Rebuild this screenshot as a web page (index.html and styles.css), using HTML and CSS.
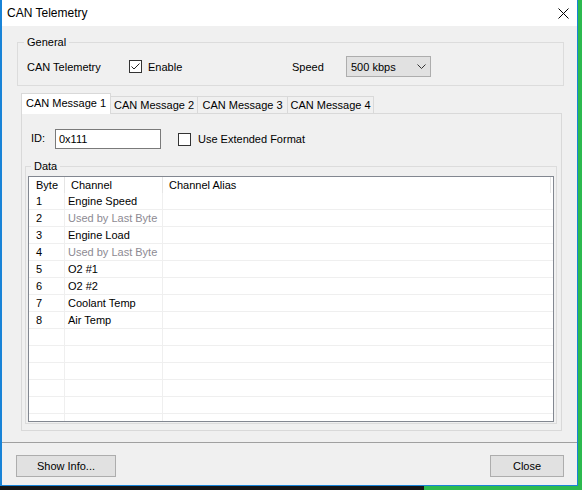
FILE: index.html
```html
<!DOCTYPE html>
<html lang="en">
<head>
    <meta charset="UTF-8">
    <meta name="viewport" content="width=device-width, initial-scale=1.0">
    <title>CAN Telemetry</title>
    <link rel="stylesheet" href="styles.css">
</head>
<body>
    <div class="window">
        <div class="titlebar">
            <span class="title">CAN Telemetry</span>
            <svg class="close-x" width="11" height="11" viewBox="0 0 11 11">
                <path d="M0.5 0.5 L10.5 10.5 M10.5 0.5 L0.5 10.5" stroke="#000" stroke-width="1" fill="none"/>
            </svg>
        </div>

        <fieldset class="group general">
            <legend>General</legend>
            <div class="general-row">
                <span class="gen-label">CAN Telemetry</span>
                <label class="check gen-check">
                    <span class="box">
                        <svg width="11" height="11" viewBox="0 0 11 11">
                            <path d="M1.5 5.5 L4 8 L9.5 2.5" stroke="#222" stroke-width="1" fill="none"/>
                        </svg>
                    </span>
                    Enable
                </label>
                <span class="speed-label">Speed</span>
                <div class="select">
                    <span>500 kbps</span>
                    <svg width="9" height="5" viewBox="0 0 9 5">
                        <path d="M0.5 0.5 L4.5 4.5 L8.5 0.5" stroke="#333" stroke-width="1" fill="none"/>
                    </svg>
                </div>
            </div>
        </fieldset>

        <div class="tabs">
            <div class="tab-strip">
                <div class="tab active" style="width: 90px">CAN Message 1</div>
                <div class="tab" style="width: 88px">CAN Message 2</div>
                <div class="tab" style="width: 91px">CAN Message 3</div>
                <div class="tab" style="width: 87px">CAN Message 4</div>
            </div>
            <div class="tab-panel">
                <div class="id-row">
                    <span class="id-label">ID:</span>
                    <div class="textbox">0x111</div>
                    <label class="check ext-check">
                        <span class="box"></span>
                        Use Extended Format
                    </label>
                </div>

                <fieldset class="group data">
                    <legend>Data</legend>
                    <div class="listview">
                        <div class="lv-head">
                            <div class="lv-hcell">Byte</div>
                            <div class="lv-hcell">Channel</div>
                            <div class="lv-hcell">Channel Alias</div>
                        </div>
                        <div class="lv-row"><div class="c1">1</div><div class="c2">Engine Speed</div><div class="c3"></div></div>
                        <div class="lv-row"><div class="c1">2</div><div class="c2 muted">Used by Last Byte</div><div class="c3"></div></div>
                        <div class="lv-row"><div class="c1">3</div><div class="c2">Engine Load</div><div class="c3"></div></div>
                        <div class="lv-row"><div class="c1">4</div><div class="c2 muted">Used by Last Byte</div><div class="c3"></div></div>
                        <div class="lv-row"><div class="c1">5</div><div class="c2">O2 #1</div><div class="c3"></div></div>
                        <div class="lv-row"><div class="c1">6</div><div class="c2">O2 #2</div><div class="c3"></div></div>
                        <div class="lv-row"><div class="c1">7</div><div class="c2">Coolant Temp</div><div class="c3"></div></div>
                        <div class="lv-row"><div class="c1">8</div><div class="c2">Air Temp</div><div class="c3"></div></div>
                        <div class="lv-row"><div class="c1"></div><div class="c2"></div><div class="c3"></div></div>
                        <div class="lv-row"><div class="c1"></div><div class="c2"></div><div class="c3"></div></div>
                        <div class="lv-row"><div class="c1"></div><div class="c2"></div><div class="c3"></div></div>
                        <div class="lv-row"><div class="c1"></div><div class="c2"></div><div class="c3"></div></div>
                        <div class="lv-row"><div class="c1"></div><div class="c2"></div><div class="c3"></div></div>
                        <div class="lv-row"><div class="c1"></div><div class="c2"></div><div class="c3"></div></div>
                    </div>
                </fieldset>
            </div>
        </div>

        <div class="separator"></div>

        <div class="footer">
            <button class="btn" style="width: 100px">Show Info...</button>
            <button class="btn" style="width: 74px">Close</button>
        </div>
    </div>
</body>
</html>
```

FILE: styles.css
```css
html, body {
    margin: 0;
    padding: 0;
}
body {
    width: 582px;
    height: 490px;
    overflow: hidden;
    font-family: "Liberation Sans", Arial, sans-serif;
    font-size: 11px;
    color: #000;
    background: linear-gradient(to right, #161616 424px, #2cba4f 424px);
}
.window {
    width: 578px;
    height: 486px;
    box-sizing: border-box;
    border: 1px solid #1883d7;
    border-top: none;
    border-left-width: 2px;
    background: #f0f0f0;
    display: flex;
    flex-direction: column;
}
.titlebar {
    height: 26px;
    flex: none;
    background: #fff;
    display: flex;
    align-items: center;
    justify-content: space-between;
    padding: 0 8px 0 5px;
}
.title {
    font-size: 12px;
}
.close-x {
    display: block;
}

/* group boxes */
.group {
    border: 1px solid #dcdcdc;
    min-width: 0;
}
.group legend {
    font-size: 11px;
    line-height: 13px;
    padding: 0 3px;
}
.general {
    margin: 10px 13px 0 15px;
    padding: 7px 0 8px 9px;
}
.general legend {
    margin-left: -3px;
}
.general-row {
    display: flex;
    align-items: center;
    height: 21px;
}
.gen-label {
    width: 102px;
}
.gen-check {
    width: 163px;
}
.speed-label {
    width: 54px;
}
.check {
    display: flex;
    align-items: center;
    gap: 6px;
}
.box {
    width: 13px;
    height: 13px;
    box-sizing: border-box;
    border: 1px solid #333;
    background: #fff;
    display: flex;
    align-items: center;
    justify-content: center;
}
.box svg {
    display: block;
}
.select {
    width: 85px;
    height: 21px;
    box-sizing: border-box;
    border: 1px solid #adadad;
    background: #e1e1e1;
    display: flex;
    align-items: center;
    justify-content: space-between;
    padding: 0 4px 0 4px;
}

/* tabs */
.tabs {
    margin: 7px 15px 0 19px;
}
.tab-strip {
    display: flex;
    align-items: flex-end;
    height: 20px;
}
.tab {
    height: 17px;
    box-sizing: border-box;
    border: 1px solid #d9d9d9;
    border-bottom: none;
    background: #f0f0f0;
    margin-left: -1px;
    text-align: center;
    line-height: 17px;
    white-space: nowrap;
}
.tab.active {
    position: relative;
    z-index: 1;
    height: 21px;
    margin-left: 0;
    margin-bottom: -1px;
    background: #fff;
    line-height: 19px;
}
.tab-panel {
    border: 1px solid #d9d9d9;
    background: #f0f0f0;
    padding: 15px 4px 6px 3px;
}
.id-row {
    display: flex;
    align-items: center;
    height: 20px;
}
.id-label {
    width: 24px;
    padding-left: 6px;
    margin-top: -3px;
}
.textbox {
    width: 106px;
    height: 20px;
    box-sizing: border-box;
    border: 1px solid #7a7a7a;
    background: #fff;
    padding-left: 3px;
    line-height: 18px;
}
.ext-check {
    margin-left: 17px;
    gap: 7px;
}
.data {
    margin: 11px 0 0 0;
    padding: 3px 2px 1px 2px;
}
.data legend {
    margin-left: 3px;
}

/* list view */
.listview {
    height: 246px;
    box-sizing: border-box;
    border: 1px solid #828790;
    background: #fff;
    overflow: hidden;
}
.lv-head,
.lv-row {
    display: grid;
    grid-template-columns: 36px 98px 388px;
}
.lv-head {
    height: 16px;
    line-height: 16px;
}
.lv-hcell {
    border-right: 1px solid #e5e5e5;
    padding-left: 6px;
}
.lv-hcell:first-child {
    padding-left: 7px;
}
.lv-row {
    height: 17px;
    box-sizing: border-box;
    border-bottom: 1px solid #efefef;
    line-height: 16px;
}
.lv-row .c1 {
    padding-left: 7px;
    border-right: 1px solid #efefef;
}
.lv-row .c2 {
    padding-left: 3px;
    border-right: 1px solid #efefef;
    white-space: nowrap;
}
.muted {
    color: #8d8a93;
}

.separator {
    height: 1px;
    background: #a0a0a0;
    margin-top: 11px;
}
.footer {
    display: flex;
    justify-content: space-between;
    padding: 12px 13px 0 14px;
}
.btn {
    height: 22px;
    box-sizing: border-box;
    border: 1px solid #adadad;
    background: #e1e1e1;
    font-family: "Liberation Sans", Arial, sans-serif;
    font-size: 11px;
    color: #000;
    padding: 0;
}
```
